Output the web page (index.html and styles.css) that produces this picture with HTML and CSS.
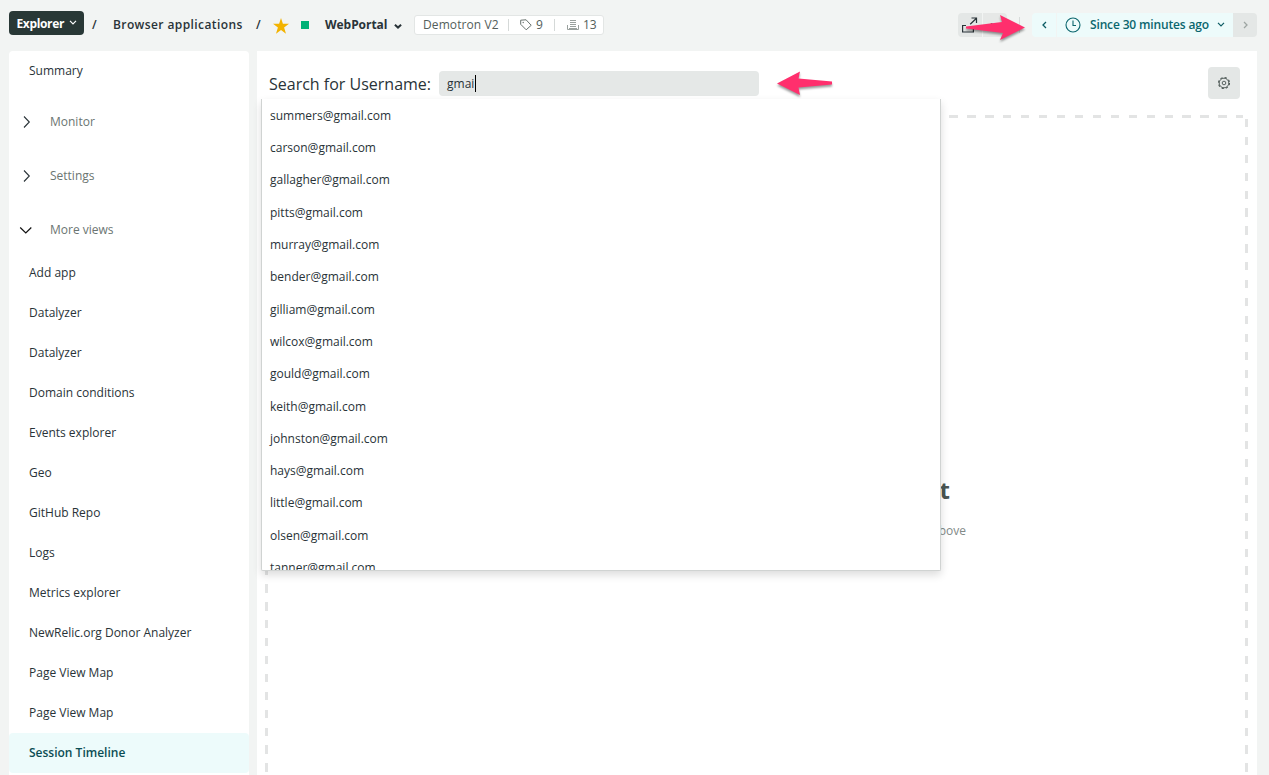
FILE: index.html
```html
<!DOCTYPE html>
<html lang="en">
<head>
<meta charset="utf-8">
<title>WebPortal - Session Timeline</title>
<link rel="stylesheet" href="styles.css">
</head>
<body>
<header class="topbar">
  <button class="explorer"><span>Explorer</span> <svg width="8" height="5" viewBox="0 0 8 5"><path d="M1 .8 4 3.8 7 .8" fill="none" stroke="#fff" stroke-width="1.2"/></svg></button>
  <span class="slash slash-first">/</span>
  <span class="crumb">Browser applications</span>
  <span class="slash slash-second">/</span>
  <svg class="star" width="16" height="16" viewBox="0 0 16 16"><path fill="#f3b300" d="M8 0 9.9 5.8H16L11.1 9.4 13 15.8 8 12 3 15.8 4.9 9.4 0 5.8H6.1Z"/></svg>
  <span class="status"></span>
  <span class="entity">WebPortal</span>
  <svg class="entity-caret" width="8" height="5" viewBox="0 0 8 5"><path d="M.9.8 4 3.6 7.1.8" fill="none" stroke="#293338" stroke-width="2"/></svg>
  <div class="meta">
    <span class="account">Demotron V2</span><i class="divider"></i>
    <svg class="tag" width="12" height="12" viewBox="0 0 12 12"><path d="M.7 1.2v4.1l5.5 5.5 5-4.5L6.1.8Z" fill="none" stroke="#68726e" stroke-linejoin="round"/><circle cx="3.2" cy="3.5" r=".7" fill="#68726e"/></svg>
    <span>9</span><i class="divider divider-second"></i>
    <svg class="stack" width="12" height="12" viewBox="0 0 12 12"><path d="M3 1.5h6M3 3.5h6M3 5.5h6M3 7.5h6M.5 6v4.5h11V6M2 9.5h8" fill="none" stroke="#9aa19e"/></svg>
    <span>13</span>
  </div>
  <div class="tools">
    <div class="share"><svg width="16" height="16" viewBox="0 0 16 16"><path d="M4 8.5H.6V15H11.4V11.5M8.2 7.3 14.5 1.2M9.5 1h5v5" fill="none" stroke="#293338" stroke-width="1.2"/></svg></div>
    <div class="more">···</div>
    <i class="tool-divider"></i>
    <div class="prev"><svg width="5" height="8" viewBox="0 0 5 8"><path d="M4 1 1 4 4 7" fill="none" stroke="#0b5b63" stroke-width="1.3"/></svg></div>
    <div class="time"><svg width="16" height="16" viewBox="0 0 16 16"><circle cx="8" cy="8" r="7" fill="none" stroke="#0b666e" stroke-width="1.1"/><path d="M8 3.5V8.5h3" fill="none" stroke="#0b666e" stroke-width="1.1"/></svg><span>Since 30 minutes ago</span><svg width="8" height="5" viewBox="0 0 8 5"><path d="M1 .8 4 3.8 7 .8" fill="none" stroke="#0b5b63" stroke-width="1.2"/></svg></div>
    <div class="next"><svg width="5" height="8" viewBox="0 0 5 8"><path d="M1 1 4 4 1 7" fill="none" stroke="#9da5a2" stroke-width="1.3"/></svg></div>
  </div>
</header>
<div class="layout">
  <nav class="sidebar">
    <a class="item">Summary</a>
    <div class="group group-first"><svg width="14" height="14" viewBox="0 0 14 14"><path d="m5 1.5 5.3 5.5L5 12.5" fill="none" stroke="#293338" stroke-width="1.1"/></svg><span>Monitor</span></div>
    <div class="group"><svg width="14" height="14" viewBox="0 0 14 14"><path d="m5 1.5 5.3 5.5L5 12.5" fill="none" stroke="#293338" stroke-width="1.1"/></svg><span>Settings</span></div>
    <div class="group"><svg width="14" height="14" viewBox="0 0 14 14"><path d="M1.2 4.5 6.8 10l5.5-5.5" fill="none" stroke="#111" stroke-width="1.2"/></svg><span>More views</span></div>
    <div class="views">
      <a class="item">Add app</a>
      <a class="item">Datalyzer</a>
      <a class="item">Datalyzer</a>
      <a class="item">Domain conditions</a>
      <a class="item">Events explorer</a>
      <a class="item">Geo</a>
      <a class="item">GitHub Repo</a>
      <a class="item">Logs</a>
      <a class="item">Metrics explorer</a>
      <a class="item">NewRelic.org Donor Analyzer</a>
      <a class="item">Page View Map</a>
      <a class="item">Page View Map</a>
      <a class="item active">Session Timeline</a>
    </div>
  </nav>
  <main class="panel">
    <div class="search">
      <label class="search-label">Search for Username:</label>
      <div class="input"><span>gmai</span><i class="cursor"></i></div>
      <button class="settings"><svg width="14" height="14" viewBox="0 0 14 14"><circle cx="7" cy="7" r="5.5" fill="none" stroke="#4a5552" stroke-width="1.1" stroke-dasharray="2.2 2.12"/><circle cx="7" cy="7" r="4.8" fill="none" stroke="#4a5552" stroke-width=".9"/><circle cx="7" cy="7" r="1.8" fill="none" stroke="#4a5552" stroke-width=".9"/></svg></button>
      <ul class="dropdown">
        <li>summers@gmail.com</li>
        <li>carson@gmail.com</li>
        <li>gallagher@gmail.com</li>
        <li>pitts@gmail.com</li>
        <li>murray@gmail.com</li>
        <li>bender@gmail.com</li>
        <li>gilliam@gmail.com</li>
        <li>wilcox@gmail.com</li>
        <li>gould@gmail.com</li>
        <li>keith@gmail.com</li>
        <li>johnston@gmail.com</li>
        <li>hays@gmail.com</li>
        <li>little@gmail.com</li>
        <li>olsen@gmail.com</li>
        <li>tanner@gmail.com</li>
      </ul>
    </div>
    <section class="empty">
      <h2>t</h2>
      <p>above</p>
    </section>
  </main>
</div>
<svg class="arrow arrow-right" width="64" height="34" viewBox="0 0 64 34"><path fill="#ff2f6d" d="M1 14.5 37 10 35 3 60 15.5 35 28 38 21 1 16.5Z"/></svg>
<svg class="arrow arrow-left" width="62" height="32" viewBox="0 0 62 32"><path fill="#ff2f6d" d="M3 12.5 26 .5 24.5 7.5 58 10.5V13.5L24.5 16.5 26 24Z"/></svg>
</body>
</html>
```
FILE: styles.css
```css
* { box-sizing: border-box; }
body {
  margin: 0;
  height: 775px;
  overflow: hidden;
  position: relative;
  background: #f2f4f3;
  color: #293338;
  font: 12px/20px "Open Sans", "Noto Sans", sans-serif;
}
svg { display: block; flex: none; }
button { border: 0; padding: 0; font: inherit; }
.topbar { display: flex; align-items: center; height: 51px; padding: 0 12px 2px 9px; font-weight: 600; }
.topbar > * { flex: none; }
.explorer {
  display: flex; align-items: center; justify-content: center; gap: 5px;
  width: 75px; height: 24px; margin-bottom: 4px;
  border-radius: 4px; background: #293836; color: #fff; font-weight: 600;
}
.explorer span { width: 47px; padding-top: 2px; text-align: left; white-space: nowrap; font-weight: 700; letter-spacing: -.35px; }
.slash-first { width: 29px; padding-left: 8px; }
.crumb { width: 143px; letter-spacing: .4px; }
.slash-second { width: 17px; }
.status { width: 8px; height: 8px; margin: 1px 16px 0 12px; background: #00b176; }
.star { margin-top: 2px; }
.entity { width: 69px; font-weight: 700; letter-spacing: -.05px; }
.entity-caret { margin-top: 3px; }
.meta {
  display: flex; align-items: center; width: 190px; height: 20px; margin-left: 12px; padding-left: 8px;
  border: 1px solid #e3e6e5; border-radius: 3px; background: #fff; color: #535e5b; font-weight: 400;
}
.account { width: 85px; letter-spacing: .1px; }
.divider { width: 1px; height: 12px; margin-right: 11px; background: #d5d9d8; }
.divider-second { margin-left: 11px; margin-right: 12px; }
.tag { margin-right: 4px; }
.stack { margin-right: 4px; }
.tools { display: flex; align-items: center; height: 24px; margin-left: auto; color: #0b666e; }
.tools > * { display: flex; align-items: center; justify-content: center; height: 24px; }
.share { width: 24px; border-radius: 4px 0 0 4px; background: #e4e7e6; }
.more { width: 24px; margin-left: 1px; border-radius: 0 4px 4px 0; background: #e6e8e7; color: #293338; }
.tools > .tool-divider { width: 1px; height: 16px; margin: 0 12px; background: #d8dcdb; }
.prev { width: 24px; border-radius: 4px 0 0 4px; background: #edfbfb; }
.time { width: 176px; margin-left: 1px; background: #edfbfb; }
.time span { width: 120px; margin: 0 7px 0 9px; white-space: nowrap; letter-spacing: -.15px; }
.next { width: 24px; border-radius: 0 4px 4px 0; background: #e4e7e6; }
.layout { display: flex; gap: 8px; height: 724px; padding: 0 12px 0 9px; }
.sidebar { width: 240px; border-radius: 4px 4px 0 0; background: #fff; }
.item { display: flex; align-items: center; height: 40px; padding-left: 20px; }
.group { display: flex; align-items: center; height: 54px; padding-left: 10px; gap: 17px; color: #6b7572; }
.group-first { margin-top: 4px; }
.views { margin-top: -4px; }
.active { border-radius: 4px; background: #edfbfb; color: #0b4d54; font-weight: 600; }
.panel { display: flex; flex-direction: column; width: 1000px; background: #fff; }
.search { display: flex; align-items: center; position: relative; height: 64px; padding: 0 17px 0 12px; }
.search-label { width: 170px; padding-top: 2px; font-size: 16px; white-space: nowrap; }
.input { display: flex; align-items: center; width: 320px; height: 25px; padding-left: 8px; border-radius: 4px; background: #e5e8e7; }
.input span { padding-top: 2px; }
.cursor { width: 1px; height: 17px; margin-left: 1px; background: #000; }
.settings { display: flex; align-items: center; justify-content: center; width: 32px; height: 32px; margin-left: auto; border-radius: 4px; background: #e4e7e6; }
.dropdown {
  position: absolute; z-index: 2; left: 4px; top: 48px; width: 680px; height: 472px;
  margin: 0; padding: .7px 0 0; overflow: hidden; list-style: none; background: #fff;
  border: 1px solid #d0d3d2; border-top: 0; border-radius: 0 0 2px 2px; box-shadow: 0 4px 8px rgba(0, 0, 0, .14);
}
.dropdown li { display: flex; align-items: center; height: 32.3px; padding-left: 8px; }
.empty {
  flex: 1; margin: 0 9px 0 8px; padding: 359px 282px 0 0; text-align: right; color: #828a88;
  background:
    repeating-linear-gradient(90deg, #e3e4e4 0 8.5px, transparent 8.5px 17.95px) 2px 0 / 976px 3px no-repeat,
    repeating-linear-gradient(#e3e4e4 0 8.3px, transparent 8.3px 17.9px) 0 4px / 3px 100% no-repeat,
    repeating-linear-gradient(#e3e4e4 0 8.3px, transparent 8.3px 17.9px) 100% 4px / 3px 100% no-repeat;
}
.empty h2 { margin: 0 16px 0 0; color: #4a5552; font-size: 24px; line-height: 32px; }
.empty p { margin: 15px 0 0; }
.arrow { position: absolute; z-index: 3; filter: drop-shadow(0 2px 1px rgba(0, 0, 0, .4)); }
.arrow-right { left: 965px; top: 12px; }
.arrow-left { left: 774px; top: 71px; }
```
